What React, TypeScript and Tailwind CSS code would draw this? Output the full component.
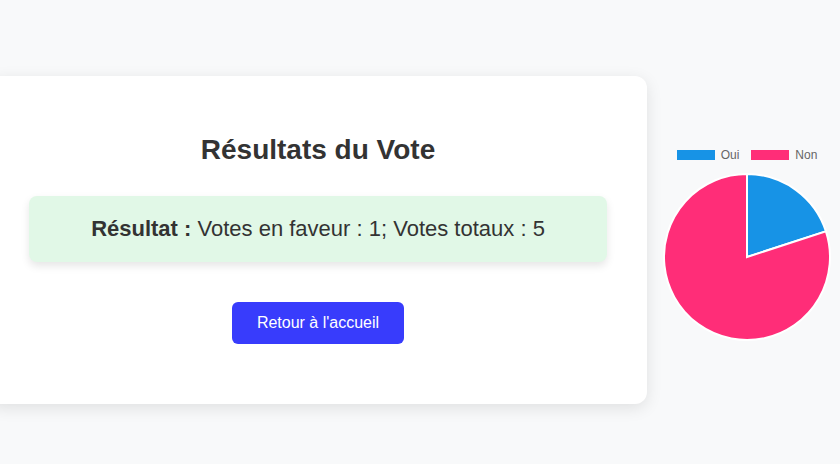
const votesFor = 1;
const votesTotal = 5;

function PieChart() {
  const cx = 85, cy = 85, r = 83;
  const angle = (votesFor / votesTotal) * Math.PI * 2;
  const ex = cx + r * Math.sin(angle);
  const ey = cy - r * Math.cos(angle);
  const large = angle > Math.PI ? 1 : 0;
  return (
    <svg width="170" height="170" viewBox="0 0 170 170">
      <path d={`M${cx},${cy} L${cx},${cy - r} A${r},${r} 0 ${large} 1 ${ex},${ey} Z`} fill="#1793e6" stroke="#fff" strokeWidth="2" />
      <path d={`M${cx},${cy} L${ex},${ey} A${r},${r} 0 ${1 - large} 1 ${cx},${cy - r} Z`} fill="#ff2d78" stroke="#fff" strokeWidth="2" />
    </svg>
  );
}

export default function App() {
  return (
    <div className="min-h-[464px] w-[840px] overflow-hidden bg-[#f8f9fa] pt-[76px] flex items-start font-['Liberation_Sans',Arial,sans-serif] text-[#333]">
      <div className="shrink-0 w-[658px] -ml-[11px] bg-white rounded-[12px] shadow-[0_4px_16px_rgba(0,0,0,0.1)] px-[40px] pt-[58px] pb-[60px] flex flex-col items-center">
        <h2 className="text-[28px] leading-[32px] font-bold">Résultats du Vote</h2>
        <div className="mt-[30px] w-full bg-[#e1f8e7] rounded-[8px] shadow-[0_4px_8px_rgba(0,0,0,0.1)] py-[20px] text-center text-[22px] leading-[26px]">
          <span className="font-bold">Résultat :</span> Votes en faveur : {votesFor}; Votes totaux : {votesTotal}
        </div>
        <button className="mt-[40px] w-[172px] h-[42px] bg-[#383cfc] text-white text-[16px] rounded-[6px]">
          Retour à l'accueil
        </button>
      </div>
      <div className="shrink-0 ml-[10px] mt-[72px] w-[180px] flex flex-col items-center">
        <div className="flex items-center gap-[12px] text-[12px] leading-[14px] text-[#666]">
          <div className="flex items-center gap-[6px]">
            <span className="w-[38px] h-[10px] bg-[#1793e6]" />
            <span>Oui</span>
          </div>
          <div className="flex items-center gap-[6px]">
            <span className="w-[38px] h-[10px] bg-[#ff2d78]" />
            <span>Non</span>
          </div>
        </div>
        <div className="mt-[10px]">
          <PieChart />
        </div>
      </div>
    </div>
  );
}
